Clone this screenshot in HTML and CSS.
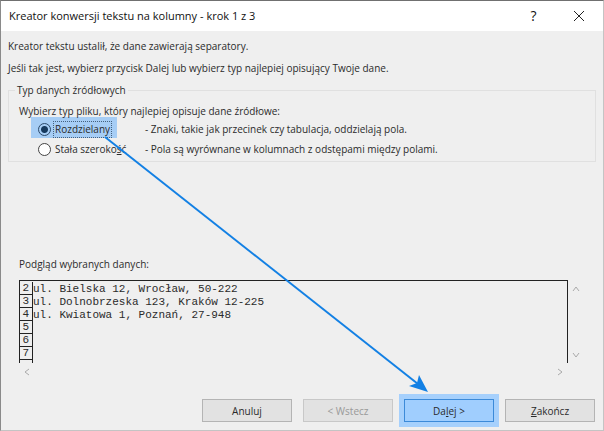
FILE: index.html
```html
<!DOCTYPE html>
<html lang="pl">

<head>
  <meta charset="UTF-8">
  <meta name="viewport" content="width=device-width, initial-scale=1.0">
  <title>Kreator konwersji tekstu na kolumny</title>
  <link rel="stylesheet" href="styles.css">
</head>

<body>
  <form class="dialog">
    <header class="titlebar">
      <h1>Kreator konwersji tekstu na kolumny - krok 1 z 3</h1>
      <button class="title-btn" type="button">?</button>
      <button class="title-btn" type="button" aria-label="Zamknij">
        <svg width="12" height="12" viewBox="0 0 12 12"><path d="M1 1L11 11M11 1L1 11" /></svg>
      </button>
    </header>

    <main class="content">
      <p>Kreator tekstu ustalił, że dane zawierają separatory.</p>
      <p>Jeśli tak jest, wybierz przycisk Dalej lub wybierz typ najlepiej opisujący Twoje dane.</p>

      <fieldset class="group">
        <legend>Typ danych źródłowych</legend>
        <p class="hint">Wybierz typ pliku, który najlepiej opisuje dane źródłowe:</p>
        <div class="option">
          <div class="choice marked">
            <input type="radio" name="type" id="delimited" checked>
            <label class="focused" for="delimited">Rozdzielany</label>
          </div>
          <span>- Znaki, takie jak przecinek czy tabulacja, oddzielają pola.</span>
        </div>
        <div class="option">
          <div class="choice">
            <input type="radio" name="type" id="fixed">
            <label for="fixed">Stała szeroko<u>ś</u>ć</label>
          </div>
          <span>- Pola są wyrównane w kolumnach z odstępami między polami.</span>
        </div>
      </fieldset>

      <section class="preview">
        <h2>Podgląd wybranych danych:</h2>
        <div class="preview-grid">
          <div class="preview-box">
            <table>
              <tr><th>2</th><td>ul. Bielska 12, Wrocław, 50-222</td></tr>
              <tr><th>3</th><td>ul. Dolnobrzeska 123, Kraków 12-225</td></tr>
              <tr><th>4</th><td>ul. Kwiatowa 1, Poznań, 27-948</td></tr>
              <tr><th>5</th><td></td></tr>
              <tr><th>6</th><td></td></tr>
              <tr><th>7</th><td></td></tr>
              <tr><th></th><td></td></tr>
            </table>
          </div>
          <div class="scroll scroll-y">
            <button type="button" aria-label="W górę"><svg width="8" height="6" viewBox="0 0 8 6"><path d="M1 5L4 1L7 5" /></svg></button>
            <button type="button" aria-label="W dół"><svg width="8" height="6" viewBox="0 0 8 6"><path d="M1 1L4 5L7 1" /></svg></button>
          </div>
          <div class="scroll scroll-x">
            <button type="button" aria-label="W lewo"><svg width="6" height="8" viewBox="0 0 6 8"><path d="M5 1L1 4L5 7" /></svg></button>
            <button type="button" aria-label="W prawo"><svg width="6" height="8" viewBox="0 0 6 8"><path d="M1 1L5 4L1 7" /></svg></button>
          </div>
        </div>
      </section>
    </main>

    <footer class="actions">
      <button class="btn" type="button">Anuluj</button>
      <button class="btn" type="button" disabled>&lt; Wstecz</button>
      <button class="btn btn-primary" type="button">Da<u>l</u>ej &gt;</button>
      <button class="btn" type="button"><u>Z</u>akończ</button>
    </footer>

    <!-- arrow from the chosen option to the next button -->
    <svg class="arrow" width="604" height="431" viewBox="0 0 604 431">
      <path class="arrow-line" d="M105 137L418 384" />
      <path class="arrow-head" d="M428 392L419 375L417 383L409 386Z" />
    </svg>
  </form>
</body>

</html>
```

FILE: styles.css
```css
* {
  box-sizing: border-box;
}

body {
  margin: 0;
  background: #efefef;
  color: #2b2b2b;
  font: 10px/16px "Open Sans", "Noto Sans", sans-serif;
}

h1,
h2,
p {
  margin: 0;
  font-size: inherit;
  font-weight: normal;
}

button {
  font: inherit;
  color: inherit;
}

.dialog {
  position: relative;
  display: flex;
  flex-direction: column;
  min-height: 100vh;
  border: 1px solid #c4c4c4;
  border-top-color: #707070;
  border-left-color: #8a8a8a;
}

.titlebar {
  display: flex;
  align-items: center;
  height: 30px;
  padding-left: 8px;
  background: #fff;
  color: #111;
}

.titlebar h1 {
  flex: 1;
  font-size: 11px;
}

.title-btn {
  display: flex;
  align-items: center;
  justify-content: center;
  width: 45px;
  height: 30px;
  padding: 0;
  border: none;
  background: none;
  font-size: 14px;
}

.title-btn svg {
  fill: none;
  stroke: #222;
}

.title-btn:last-child {
  margin-right: 2px;
}

.content {
  display: flex;
  flex-direction: column;
  flex: 1;
  gap: 6px;
  padding: 7px 7px 0;
}

.group {
  min-width: 0;
  margin: 0;
  padding: 5px 10px 2px;
  border: 1px solid #e0e0e0;
}

.group legend {
  margin-left: -4px;
  padding: 0 2px;
}

.option {
  display: flex;
  align-items: center;
  height: 20px;
}

.choice {
  display: flex;
  align-items: center;
  width: 86px;
  height: 18px;
  margin: 0 28px 0 12px;
  padding-left: 7px;
  white-space: nowrap;
}

.marked {
  background: #a6cdf5;
  box-shadow: 0 -3px 0 #a6cdf5;
}

.choice input {
  appearance: none;
  flex: none;
  width: 13px;
  height: 13px;
  margin: 0 3px 0 0;
  border: 1px solid #444;
  border-radius: 50%;
  background: #fff;
}

.choice input:checked {
  border-color: #2c4a6b;
  background: radial-gradient(circle, #173a5e 3px, #a6cdf5 4px);
}

.choice label {
  padding: 0 1px;
}

.choice .focused {
  height: 15px;
  line-height: 15px;
  outline: 1px dotted #44617f;
}

.hint {
  position: relative;
  z-index: 1;
}

.preview {
  margin-top: auto;
  padding-left: 11px;
}

.preview h2 {
  margin-bottom: 8px;
}

.preview-grid {
  display: grid;
  grid-template-columns: 1fr 18px;
  margin-right: 10px;
}

.preview-box {
  height: 83px;
  padding-top: 1px;
  overflow: hidden;
  border: 1px solid #222;
  border-bottom: none;
  font: 11px/12px "Liberation Mono", monospace;
}

.preview-box table {
  width: 100%;
  border-spacing: 0;
}

.preview-box th,
.preview-box td {
  height: 13px;
  padding: 0;
  font-weight: normal;
  vertical-align: bottom;
}

.preview-box th {
  width: 13px;
  padding-right: 3px;
  border-right: 1px solid #222;
  border-bottom: 1px solid #222;
  text-align: right;
}

.scroll {
  display: flex;
  justify-content: space-between;
}

.scroll-y {
  flex-direction: column;
}

.scroll button {
  display: flex;
  align-items: center;
  justify-content: center;
  width: 16px;
  height: 17px;
  padding: 0;
  border: none;
  background: none;
}

.scroll svg {
  fill: none;
  stroke: #aaa;
}

.actions {
  display: flex;
  justify-content: flex-end;
  gap: 11px;
  padding: 19px 8px 8px;
}

.btn {
  width: 90px;
  height: 23px;
  padding: 0;
  border: 1px solid #b4b4b4;
  background: #e2e2e2;
}

.btn:disabled {
  border-color: #c8c8c8;
  color: #999;
}

.btn-primary {
  border-color: #3c8ad8;
  background: #a0cefe;
  box-shadow: 0 0 0 5px #a6d0fc;
}

.arrow {
  position: absolute;
  top: -1px;
  left: -1px;
  z-index: 2;
  pointer-events: none;
}

.arrow-line {
  fill: none;
  stroke: #1380e4;
  stroke-width: 2;
}

.arrow-head {
  fill: #1380e4;
}
```
